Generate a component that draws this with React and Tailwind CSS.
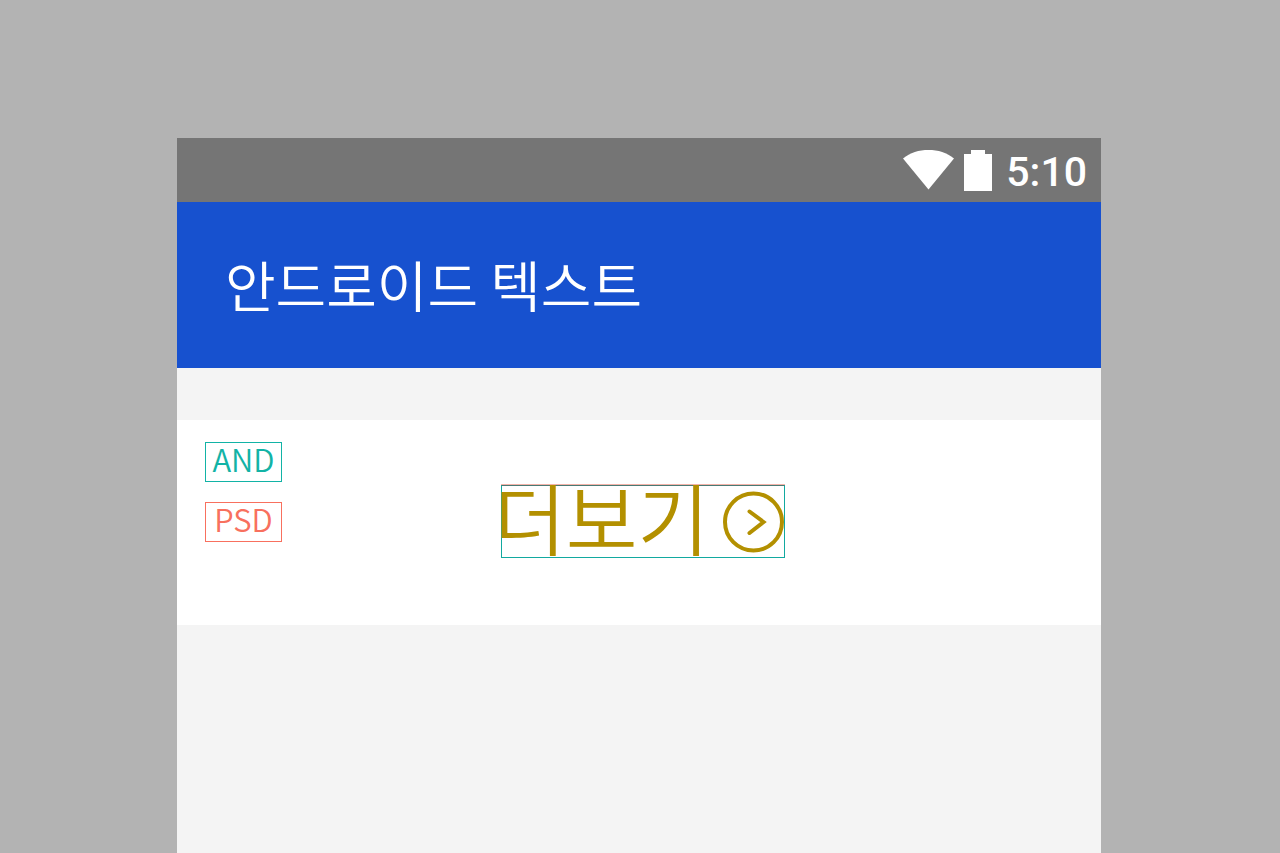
const korean = "font-['Noto_Sans_CJK_KR',sans-serif]";

function WifiIcon() {
  return (
    <svg width="52" height="41" viewBox="0 0 52 41" aria-hidden="true">
      <path d="M0 8.500C7 2.500 16 0 25.500 0S44 2.500 51 8.500L25.500 39.500Z" fill="#fff" />
    </svg>
  );
}

function BatteryIcon() {
  return (
    <svg width="28" height="41" viewBox="0 0 28 41" aria-hidden="true">
      <path d="M7 0H21V4H28V41H0V4H7Z" fill="#fff" />
    </svg>
  );
}

function StatusBar() {
  return (
    <div className="flex h-16 items-center justify-end bg-[#757575] pr-[14px] text-white">
      <WifiIcon />
      <div className="ml-[9px]">
        <BatteryIcon />
      </div>
      <time className="ml-[14px] pt-1 font-['Roboto',sans-serif] text-[41px] leading-[56px] font-medium">
        5:10
      </time>
    </div>
  );
}

function MoreButton() {
  return (
    <button
      type="button"
      className="flex h-[73px] w-[284px] items-center justify-between border border-[#12a9a0] border-t-[#4a7a74] text-[#b39000] shadow-[0_-1px_0_#f3b3a9]"
    >
      <span className={`${korean} -ml-2 pb-3 text-[78px] leading-[72px] font-[350] whitespace-nowrap`}>더보기</span>
      <svg width="61" height="62" viewBox="0 0 61 62" fill="none" stroke="currentColor" strokeWidth="4" className="shrink-0" aria-hidden="true">
        <circle cx="30.500" cy="31" r="28.500" />
        <path d="M26.500 20.500L40.500 31L26.500 42" strokeLinecap="round" />
      </svg>
    </button>
  );
}

export default function App() {
  return (
    <div className="flex min-h-screen flex-col bg-[#b3b3b3] pt-[138px] pr-[179px] pl-[177px]">
      <div className="flex grow flex-col bg-[#f4f4f4]">
        <StatusBar />
        <header className="flex h-[166px] items-center bg-[#1751cf] pb-1 pl-12">
          <h1 className={`${korean} text-[55px] leading-[80px] font-[350] text-white`}>안드로이드 텍스트</h1>
        </header>
        <main className="mt-[52px] flex h-[205px] items-start bg-white pt-[22px] pl-7">
          <div className={`${korean} flex w-[77px] shrink-0 flex-col gap-5 text-center text-[31px] leading-8 font-[350]`}>
            <span className="h-10 border border-[#12b3a6] text-[#12b3a6]">AND</span>
            <span className="h-10 border border-[#f8705e] text-[#f8705e]">PSD</span>
          </div>
          <div className="mt-[43px] ml-[219px]">
            <MoreButton />
          </div>
        </main>
      </div>
    </div>
  );
}
